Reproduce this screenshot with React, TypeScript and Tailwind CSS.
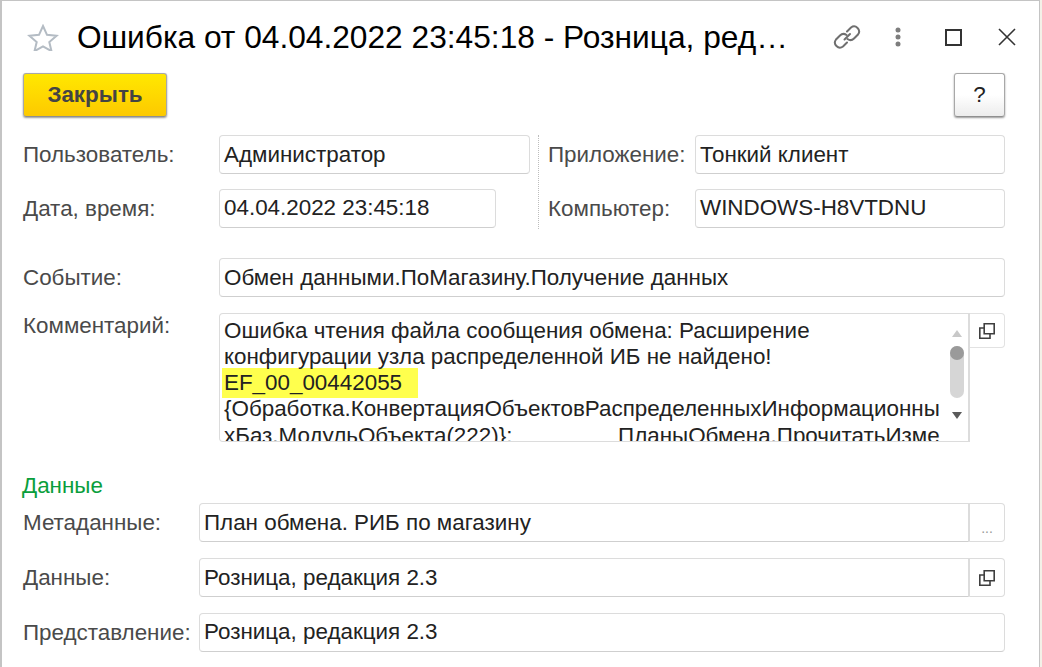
const FONT = "font-['Liberation_Sans',Arial,sans-serif]";

function CopyIcon() {
  return (
    <svg width="16" height="16" viewBox="0 0 16 16" fill="none" stroke="#3f3f3f" strokeWidth="1.6">
      <path d="M5.2 0.8H15.2V10.8H5.2Z" />
      <path d="M5.2 5H0.8V15.2H11V10.8" />
    </svg>
  );
}

function Field({ value, className = "" }: { value: string; className?: string }) {
  return (
    <div className={`h-[39px] min-w-0 rounded-[4px] border border-[#dcdcdc] border-b-[#cfcfcf] bg-white pl-[4px] text-[22.4px] text-[#222] whitespace-nowrap ${className}`}>
      {value}
    </div>
  );
}

function Label({ text, className = "" }: { text: string; className?: string }) {
  return <div className={`text-[22.4px] leading-[39px] text-[#4a4a4a] whitespace-nowrap ${className}`}>{text}</div>;
}

function Row({ label, labelW, children, className = "" }: { label: string; labelW: string; children: React.ReactNode; className?: string }) {
  return (
    <div className={`flex h-[39px] ${className}`}>
      <div className={labelW}><Label text={label} /></div>
      {children}
    </div>
  );
}

export default function App() {
  return (
    <div className={`${FONT} h-[667px] w-[1042px] overflow-hidden bg-[#f3f1e8]`}>
      <div className="h-[667px] w-[1040px] border-l-2 border-t border-r border-[#c4c4c4] bg-white">
        <div className="flex h-[72px] items-center pl-[25px] pr-[20px]">
          <svg width="32" height="27" viewBox="0 0 32 27" fill="none" stroke="#b4bcc4" strokeWidth="2">
            <path d="M16 2l4 8.8 9.6.9-7.3 6.3 2.2 9.2L16 22.3 7.5 27.2l2.2-9.2L2.4 11.7l9.6-.9z" />
          </svg>
          <div className="ml-[18px] w-[714px] whitespace-nowrap text-[31.7px] leading-[40px] text-black">
            Ошибка от 04.04.2022 23:45:18 - Розница, ред…
          </div>
          <div className="ml-[42px] flex items-center">
            <svg width="28" height="28" viewBox="0 0 28 28" fill="none" stroke="#6f6f6f" strokeWidth="2" strokeLinecap="round">
              <path d="M11.5 16.5 17 11" />
              <path d="M14 8.5 18 4.5a5 5 0 0 1 7 7L21 15.5a5 5 0 0 1-6.5.5" />
              <path d="M14 19.5 10 23.5a5 5 0 0 1-7-7L7 12.5a5 5 0 0 1 6.5-.5" />
            </svg>
            <svg className="ml-[34px]" width="6" height="20" viewBox="0 0 6 20" fill="#7d7d7d">
              <circle cx="3" cy="3" r="2.5" />
              <circle cx="3" cy="10" r="2.5" />
              <circle cx="3" cy="17" r="2.5" />
            </svg>
            <svg className="ml-[44px]" width="17" height="17" viewBox="0 0 17 17" fill="none" stroke="#333" strokeWidth="2">
              <rect x="1" y="1" width="15" height="15" />
            </svg>
            <svg className="ml-[36px]" width="18" height="18" viewBox="0 0 18 18" fill="none" stroke="#333" strokeWidth="1.6">
              <path d="M1 1l16 16M17 1 1 17" />
            </svg>
          </div>
        </div>

        <div className="flex h-[44px] justify-between pl-[21px] pr-[34px]">
          <button className="h-[44px] w-[144px] rounded-[3px] border border-[#a8a8a8] border-b-[#8f8f8f] bg-gradient-to-b from-[#ffe800] to-[#fdc900] text-[22.4px] font-bold text-[#444] shadow-[0_1px_2px_#999]">
            Закрыть
          </button>
          <button className="h-[44px] w-[51px] rounded-[3px] border border-[#a8a8a8] border-b-[#8f8f8f] bg-gradient-to-b from-white via-white to-[#ececec] text-[22.4px] text-[#222] shadow-[0_1px_2px_#999]">
            ?
          </button>
        </div>

        <div className="mt-[18px] flex h-[94px] pl-[21px] pr-[34px]">
          <div className="flex w-[516px] flex-col gap-[15px] border-r border-dotted border-[#bdbdbd]">
            <Row label="Пользователь:" labelW="w-[196px]">
              <Field value="Администратор" className="w-[311px] leading-[37px]" />
            </Row>
            <Row label="Дата, время:" labelW="w-[196px]">
              <Field value="04.04.2022 23:45:18" className="w-[277px] leading-[36px]" />
            </Row>
          </div>
          <div className="flex flex-1 flex-col gap-[15px] pl-[9px]">
            <Row label="Приложение:" labelW="w-[147px]">
              <Field value="Тонкий клиент" className="flex-1 leading-[37px]" />
            </Row>
            <Row label="Компьютер:" labelW="w-[147px]">
              <Field value="WINDOWS-H8VTDNU" className="flex-1 leading-[36px]" />
            </Row>
          </div>
        </div>

        <div className="mt-[29px] pl-[21px] pr-[34px]">
          <Row label="Событие:" labelW="w-[196px]">
            <Field value="Обмен данными.ПоМагазину.Получение данных" className="flex-1 leading-[38px]" />
          </Row>
        </div>

        <div className="mt-[16px] flex pl-[21px] pr-[34px]">
          <div className="w-[196px] text-[22.4px] leading-[26px] text-[#4a4a4a]">Комментарий:</div>
          <div className="relative h-[129px] w-[751px] overflow-hidden rounded-l-[4px] border border-r-2 border-[#dcdcdc] bg-white pl-[4px] pt-[4px] pr-[30px] text-[22.4px] leading-[26px] text-[#222]">
            <div className="whitespace-nowrap">Ошибка чтения файла сообщения обмена: Расширение</div>
            <div className="whitespace-nowrap">конфигурации узла распределенной ИБ не найдено!</div>
            <div className="-ml-[2px] -my-[2px] w-[196px] whitespace-nowrap bg-[#ffff4d] pl-[2px] leading-[30px]">EF_00_00442055</div>
            <div className="whitespace-nowrap">{"{Обработка.КонвертацияОбъектовРаспределенныхИнформационны"}</div>
            <div className="pt-[1px] whitespace-pre">{"хБаз.МодульОбъекта(222)}:                 ПланыОбмена.ПрочитатьИзме"}</div>
            <div className="absolute right-0 top-0 flex h-full w-[22px] flex-col items-center bg-white pt-[15px]">
              <svg width="10" height="8" viewBox="0 0 10 8" fill="#c8c8c8"><path d="M5 1l5 7H0z" /></svg>
              <div className="mt-[9px] h-[52px] w-[14px] rounded-full bg-[#d6d6d6]">
                <div className="h-[14px] w-[14px] rounded-full bg-[#9a9a9a]" />
              </div>
              <svg className="mt-[13px]" width="10" height="8" viewBox="0 0 10 8" fill="#5a5a5a"><path d="M5 8l5-7H0z" /></svg>
            </div>
          </div>
          <div className="flex h-[35px] w-[35px] items-center justify-center rounded-r-[4px] border border-l-0 border-[#e2e2e2] bg-white">
            <CopyIcon />
          </div>
        </div>

        <div className="mt-[31px] pl-[20px] text-[22.4px] leading-[26px] text-[#0a9e3c]">Данные</div>

        <div className="mt-[4px] flex flex-col gap-[16px] pl-[21px] pr-[34px]">
          <Row label="Метаданные:" labelW="w-[176px]">
            <Field value="План обмена. РИБ по магазину" className="flex-1 rounded-r-none border-r-2 leading-[38px]" />
            <div className="flex h-[39px] w-[35px] items-end justify-center rounded-r-[4px] border border-l-0 border-[#dcdcdc] pb-[6px] text-[14px] leading-[14px] text-[#999]">...</div>
          </Row>
          <Row label="Данные:" labelW="w-[176px]">
            <Field value="Розница, редакция 2.3" className="flex-1 rounded-r-none border-r-2 leading-[38px]" />
            <div className="flex h-[39px] w-[35px] items-center justify-center rounded-r-[4px] border border-l-0 border-[#dcdcdc]">
              <CopyIcon />
            </div>
          </Row>
          <Row label="Представление:" labelW="w-[176px]">
            <Field value="Розница, редакция 2.3" className="flex-1 leading-[36px]" />
          </Row>
        </div>
      </div>
    </div>
  );
}
